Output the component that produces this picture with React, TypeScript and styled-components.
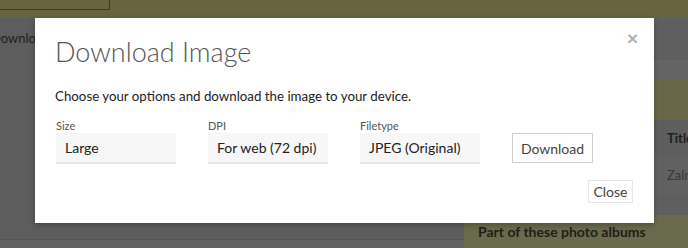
import React, { ReactElement } from "react";
import styled, { createGlobalStyle } from "styled-components";

const GlobalStyle = createGlobalStyle`
    html, body {
        margin: 0;
        padding: 0;
        width: 688px;
        height: 248px;
        overflow: hidden;
        font-family: Lato, "Open Sans", sans-serif;
    }
`;

const Page = styled.div`
    position: relative;
    width: 688px;
    height: 248px;
    background: #5e5e5e;
    display: flex;
    flex-direction: column;
`;

const TopBar = styled.div`
    height: 18px;
    flex-shrink: 0;
    background: #68643f;
`;

const TopTab = styled.div`
    width: 110px;
    height: 10px;
    box-sizing: border-box;
    border-right: 1px solid #3d3a22;
    border-bottom: 1px solid #3d3a22;
`;

const Content = styled.div`
    flex: 1;
    display: flex;
`;

const LeftColumn = styled.div`
    width: 464px;
    flex-shrink: 0;
    display: flex;
    flex-direction: column;
    background: #5d5d5d;
`;

const GhostButton = styled.div`
    margin: 12px 0 0 -9px;
    font-size: 13px;
    color: #1e1e1e;
`;

const LeftFooter = styled.div`
    margin-top: auto;
    height: 8px;
    border-top: 1px solid #555;
    background: #626262;
`;

const RightColumn = styled.div`
    flex: 1;
    min-width: 0;
    overflow: hidden;
    display: flex;
    flex-direction: column;
`;

const Band = styled.div<{ $bg: string; $h: number }>`
    height: ${(p) => p.$h}px;
    flex-shrink: 0;
    background: ${(p) => p.$bg};
    display: flex;
    align-items: center;
    padding-left: 203px;
    font-size: 13px;
`;

const CellText = styled.span<{ $strong?: boolean }>`
    color: ${(p) => (p.$strong ? "#1f1f1f" : "#3a3a3a")};
    font-weight: ${(p) => (p.$strong ? 700 : 400)};
    white-space: nowrap;
`;

const AlbumsHeader = styled.div`
    flex: 1;
    background: #6a6a4e;
    padding: 8px 0 0 14px;
    font-size: 14px;
    font-weight: 700;
    color: #1f1f14;
    white-space: nowrap;
`;

const Modal = styled.div`
    position: absolute;
    left: 35px;
    top: 18px;
    width: 619px;
    height: 205px;
    box-sizing: border-box;
    background: #fff;
    padding: 18px 21px 20px 20px;
    display: flex;
    flex-direction: column;
    box-shadow: 0 2px 6px rgba(0, 0, 0, 0.25);
`;

const CloseX = styled.button`
    position: absolute;
    top: 11px;
    right: 16px;
    border: 0;
    background: none;
    padding: 0;
    font-family: "Liberation Sans", sans-serif;
    font-size: 19px;
    font-weight: 700;
    line-height: 20px;
    color: #b0b0b0;
`;

const Title = styled.h4`
    margin: 0;
    font-size: 27px;
    line-height: 32px;
    font-weight: 300;
    color: #555;
`;

const Lead = styled.p`
    margin: 18px 0 0;
    font-size: 13.3px;
    line-height: 20px;
    color: #222;
`;

const FieldRow = styled.div`
    margin-top: 13px;
    display: flex;
    align-items: flex-end;
    gap: 32px;
    padding-left: 1px;
`;

const Field = styled.div`
    width: 120px;
    display: flex;
    flex-direction: column;
`;

const Label = styled.label`
    font-size: 11px;
    line-height: 14px;
    color: #555;
`;

const SelectBox = styled.div`
    height: 29px;
    display: flex;
    align-items: center;
    padding-left: 9px;
    background: #f7f7f7;
    border-bottom: 2px solid #e4e4e4;
    font-size: 14px;
    line-height: 20px;
    color: #222;
`;

const Button = styled.button<{ $h: number; $w: number; $border: string }>`
    height: ${(p) => p.$h}px;
    width: ${(p) => p.$w}px;
    box-sizing: border-box;
    padding: 0;
    background: #fff;
    border: 1px solid ${(p) => p.$border};
    font-family: inherit;
    font-size: 14px;
    color: #444;
`;

const DownloadButton = styled(Button)`
    margin-bottom: 1px;
`;

const Footer = styled.div`
    margin-top: 16px;
    display: flex;
    justify-content: flex-end;
`;

const fields = [
    { label: "Size", value: "Large" },
    { label: "DPI", value: "For web (72 dpi)" },
    { label: "Filetype", value: "JPEG (Original)" }
];

const App = (): ReactElement => (
    <>
        <GlobalStyle />
        <Page>
            <TopBar>
                <TopTab />
            </TopBar>
            <Content>
                <LeftColumn>
                    <GhostButton>Download</GhostButton>
                    <LeftFooter />
                </LeftColumn>
                <RightColumn>
                    <Band $bg="#5f5f5f" $h={42} />
                    <Band $bg="#646464" $h={20} />
                    <Band $bg="#686745" $h={40} />
                    <Band $bg="#5e5e5e" $h={36}>
                        <CellText $strong>Title</CellText>
                    </Band>
                    <Band $bg="#616161" $h={38}>
                        <CellText>Zalm</CellText>
                    </Band>
                    <Band $bg="#5f5f5f" $h={21} />
                    <AlbumsHeader>Part of these photo albums</AlbumsHeader>
                </RightColumn>
            </Content>

            <Modal>
                <CloseX type="button">×</CloseX>
                <Title>Download Image</Title>
                <Lead>Choose your options and download the image to your device.</Lead>
                <FieldRow>
                    {fields.map((f) => (
                        <Field key={f.label}>
                            <Label>{f.label}</Label>
                            <SelectBox>{f.value}</SelectBox>
                        </Field>
                    ))}
                    <DownloadButton type="button" $h={30} $w={81} $border="#cfcfcf">
                        Download
                    </DownloadButton>
                </FieldRow>
                <Footer>
                    <Button type="button" $h={23} $w={45} $border="#e6e6e6">
                        Close
                    </Button>
                </Footer>
            </Modal>
        </Page>
    </>
);

export default App;
